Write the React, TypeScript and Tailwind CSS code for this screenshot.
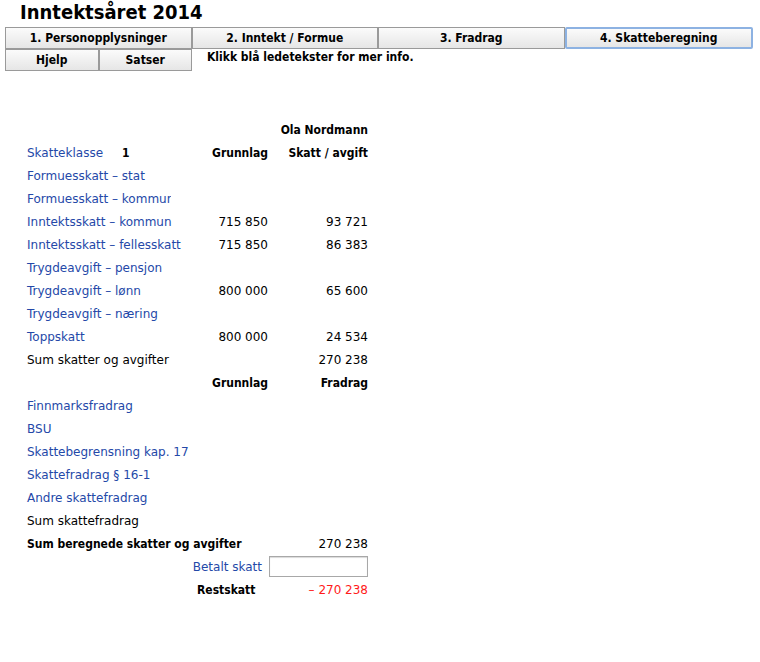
import React from "react";

const blue = "text-[#2448a8]";
const boldFont = "font-['DejaVu_Sans_Condensed','DejaVu_Sans',sans-serif] font-bold";

type Row = {
  label: string;
  link?: boolean;
  base?: string;
  value?: string;
  clip?: boolean;
};

const taxRows: Row[] = [
  { label: "Formuesskatt – stat", link: true },
  { label: "Formuesskatt – kommune", link: true, clip: true },
  { label: "Inntektsskatt – kommun", link: true, base: "715 850", value: "93 721" },
  { label: "Inntektsskatt – fellesskatt", link: true, base: "715 850", value: "86 383" },
  { label: "Trygdeavgift – pensjon", link: true },
  { label: "Trygdeavgift – lønn", link: true, base: "800 000", value: "65 600" },
  { label: "Trygdeavgift – næring", link: true },
  { label: "Toppskatt", link: true, base: "800 000", value: "24 534" },
  { label: "Sum skatter og avgifter", value: "270 238" },
];

const deductionRows: Row[] = [
  { label: "Finnmarksfradrag", link: true },
  { label: "BSU", link: true },
  { label: "Skattebegrensning kap. 17", link: true },
  { label: "Skattefradrag § 16-1", link: true },
  { label: "Andre skattefradrag", link: true },
  { label: "Sum skattefradrag" },
];

function TabButton({ label, active }: { label: string; active?: boolean }) {
  return (
    <button
      className={
        "h-[22px] flex-1 bg-gradient-to-b from-[#fbfbfb] to-[#e6e6e6] text-[12px] text-black " +
        boldFont +
        (active
          ? " border-2 border-[#8db2e2] rounded-[2px]"
          : " border border-[#9a9a9a]")
      }
    >
      {label}
    </button>
  );
}

function DataRow({ row }: { row: Row }) {
  return (
    <div className="grid h-[23px] grid-cols-[170px_71px_100px] items-center">
      <div
        className={
          (row.link ? blue : "text-black") +
          (row.clip ? " w-[144px] overflow-hidden" : "") +
          " whitespace-nowrap"
        }
      >
        {row.label}
      </div>
      <div className="text-right">{row.base}</div>
      <div className="text-right">{row.value}</div>
    </div>
  );
}

export default function App() {
  return (
    <div className="min-h-[662px] w-[760px] bg-white font-['DejaVu_Sans',sans-serif] text-[12px] text-black">
      <h1 className={"pl-[20px] text-[20px] leading-[24px] " + boldFont}>
        Inntektsåret 2014
      </h1>

      {/* Tabs */}
      <div className="flex w-[748px] ml-[5px] mt-[3px]">
        <TabButton label="1. Personopplysninger" />
        <TabButton label="2. Inntekt / Formue" />
        <TabButton label="3. Fradrag" />
        <TabButton label="4. Skatteberegning" active />
      </div>
      <div className="flex ml-[5px] items-center">
        <div className="flex w-[187px]">
          <TabButton label="Hjelp" />
          <TabButton label="Satser" />
        </div>
        <span className={"ml-[15px] -mt-[1px] self-start " + boldFont}>
          Klikk blå ledetekster for mer info.
        </span>
      </div>

      {/* Table */}
      <div className="ml-[27px] mt-[47px]">
        <div className={"grid h-[23px] grid-cols-[170px_71px_100px] items-center " + boldFont}>
          <div />
          <div />
          <div className="text-right whitespace-nowrap">Ola Nordmann</div>
        </div>
        <div className="grid h-[23px] grid-cols-[170px_71px_100px] items-center">
          <div className="flex">
            <span className={"w-[95px] " + blue}>Skatteklasse</span>
            <span className={boldFont}>1</span>
          </div>
          <div className={"text-right " + boldFont}>Grunnlag</div>
          <div className={"text-right " + boldFont}>Skatt / avgift</div>
        </div>
        {taxRows.map((r) => (
          <DataRow key={r.label} row={r} />
        ))}
        <div className={"grid h-[23px] grid-cols-[170px_71px_100px] items-center " + boldFont}>
          <div />
          <div className="text-right">Grunnlag</div>
          <div className="text-right">Fradrag</div>
        </div>
        {deductionRows.map((r) => (
          <DataRow key={r.label} row={r} />
        ))}
        <div className="grid h-[23px] grid-cols-[241px_100px] items-center">
          <div className={"whitespace-nowrap " + boldFont}>Sum beregnede skatter og avgifter</div>
          <div className="text-right">270 238</div>
        </div>
        <div className="grid h-[23px] grid-cols-[160px_81px_100px] items-center">
          <div />
          <div className={"flex justify-end whitespace-nowrap pr-[6px] " + blue}>Betalt skatt</div>
          <div className="flex justify-end">
            <input
              type="text"
              className="h-[21px] w-[99px] border border-[#a8a8a8] bg-white shadow-[inset_0_1px_1px_rgba(0,0,0,0.15)] outline-none"
            />
          </div>
        </div>
        <div className="grid h-[23px] grid-cols-[170px_171px] items-center">
          <div />
          <div className="flex justify-between">
            <span className={boldFont}>Restskatt</span>
            <span className="text-[#ff1a1a]">– 270 238</span>
          </div>
        </div>
      </div>
    </div>
  );
}
